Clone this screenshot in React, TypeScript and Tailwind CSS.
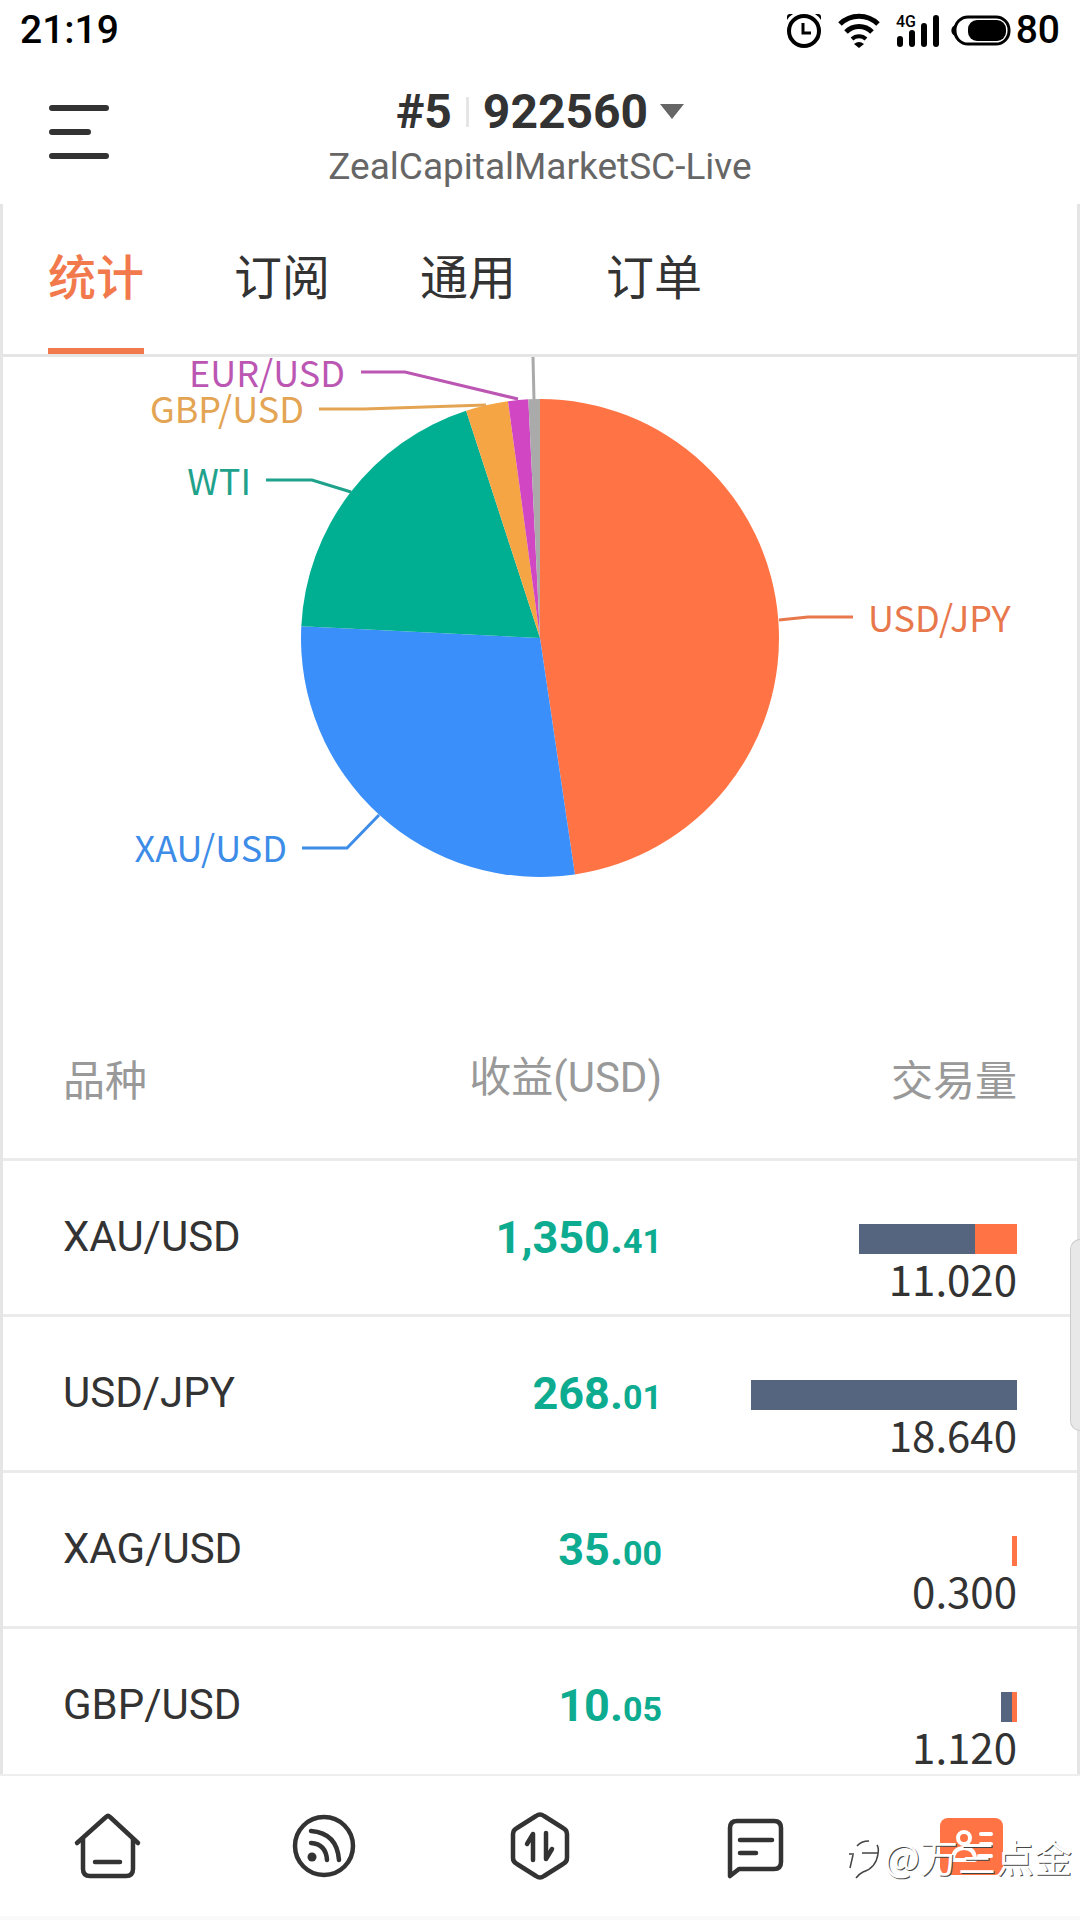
import * as React from 'react';

const tabs = ['统计', '订阅', '通用', '订单'];

// share of each symbol, in degrees of the circle
const slices = [
    { name: 'USD/JPY', from: 0, to: 171.6, color: '#ff7344' },
    { name: 'XAU/USD', from: 171.6, to: 272.8, color: '#3a8ffa' },
    { name: 'WTI', from: 272.8, to: 342, color: '#00ae92' },
    { name: 'GBP/USD', from: 342, to: 352.3, color: '#f5a544' },
    { name: 'EUR/USD', from: 352.3, to: 357.2, color: '#d146c3' },
    { name: 'XAG/USD', from: 357.2, to: 360, color: '#aaaaaa' },
];

const labels = [
    { name: 'USD/JPY', x: 865, y: 275, anchor: 'start', color: '#e8784c', line: '776,263 805,260 850,260' },
    { name: 'XAU/USD', x: 284, y: 505, anchor: 'end', color: '#3d8ce8', line: '299,491 344,491 376,458' },
    { name: 'WTI', x: 248, y: 138, anchor: 'end', color: '#1fa28b', line: '263,123 309,123 348,135' },
    { name: 'GBP/USD', x: 301, y: 66, anchor: 'end', color: '#e3a453', line: '316,52 361,52 483,48' },
    { name: 'EUR/USD', x: 342, y: 30, anchor: 'end', color: '#bb56b3', line: '358,15 402,15 515,42' },
] as const;

const rows = [
    { symbol: 'XAU/USD', whole: '1,350.', cents: '41', volume: '11.020', buy: 116, sell: 42 },
    { symbol: 'USD/JPY', whole: '268.', cents: '01', volume: '18.640', buy: 266, sell: 0 },
    { symbol: 'XAG/USD', whole: '35.', cents: '00', volume: '0.300', buy: 0, sell: 5 },
    { symbol: 'GBP/USD', whole: '10.', cents: '05', volume: '1.120', buy: 11, sell: 5 },
];

const App = () => {
    return (
        <div className="relative flex h-screen flex-col overflow-hidden bg-white font-['Roboto','Noto_Sans_CJK_SC',sans-serif] text-[#333333]">
            <StatusBar />
            <Header />
            <div className="flex min-h-0 flex-1 flex-col border-x-3 border-[#e5e5e5]">
                <Tabs />
                <main className="min-h-0 flex-1 overflow-hidden">
                    <PieChart />
                    <SymbolTable />
                </main>
            </div>
            <BottomNav />
            {/* scroll thumb */}
            <div className="absolute top-[1239px] right-0 h-[192px] w-[10px] rounded-l-xl border border-r-0 border-[#cccccc] bg-[#e8e8e8]" />
            <Watermark />
        </div>
    );
};

export default App;

// status bar

const StatusBar = () => (
    <div className="flex h-[60px] items-center justify-between px-5 text-[39px] leading-none font-medium text-black">
        <span>21:19</span>
        <div className="flex items-center">
            <svg className="h-9 w-[36px]" viewBox="0 0 36 36" fill="none" stroke="currentColor">
                <circle cx="18" cy="19" r="15" strokeWidth="4" />
                <path d="M17 11v10h8" strokeWidth="3" />
                <path d="M1 8a18 18 0 0 1 6-6H4q-3 0-3 3zM35 8a18 18 0 0 0-6-6h3q3 0 3 3z" fill="currentColor" stroke="none" />
            </svg>
            <svg className="ml-4 h-9 w-[42px]" viewBox="0 0 42 36" fill="none" stroke="currentColor" strokeWidth="5">
                <path d="M2 12a27 27 0 0 1 38 0" />
                <path d="M8 20a18 18 0 0 1 26 0" />
                <path d="M14 27a10 10 0 0 1 14 0" strokeWidth="4" />
                <path d="M16 32q5-4 10 0l-5 4z" fill="currentColor" stroke="none" />
            </svg>
            <svg className="ml-4 h-9 w-[46px]" viewBox="0 0 46 36" fill="currentColor">
                <text x="0" y="15" fontSize="16" fontWeight="500">4G</text>
                <rect x="1" y="24" width="6" height="11" rx="3" />
                <rect x="13" y="18" width="6" height="17" rx="3" />
                <rect x="25" y="11" width="6" height="24" rx="3" />
                <rect x="37" y="3" width="6" height="32" rx="3" />
            </svg>
            <svg className="ml-2 h-9 w-[62px]" viewBox="0 0 62 36" fill="currentColor">
                <rect x="5" y="5" width="54" height="27" rx="13" fill="none" stroke="currentColor" strokeWidth="3" />
                <rect x="18" y="8" width="38" height="21" rx="9" />
                <path d="M5 13a6 6 0 0 0 0 11z" />
            </svg>
            <span className="ml-1">80</span>
        </div>
    </div>
);

// account header

const Header = () => (
    <header className="grid h-[144px] grid-cols-[1fr_auto_1fr] items-start">
        <button type="button" aria-label="menu" className="mt-[45px] ml-[49px] flex w-[62px] flex-col gap-[18px]">
            <span className="h-1.5 w-[60px] rounded-full bg-[#333333]" />
            <span className="h-1.5 w-[42px] rounded-full bg-[#333333]" />
            <span className="h-1.5 w-[60px] rounded-full bg-[#333333]" />
        </button>
        <div className="flex flex-col items-center pt-6">
            <button type="button" className="flex items-center text-5xl leading-[56px] font-bold">
                #5
                <span className="mx-[14px] h-[30px] w-[3px] bg-[#e5e5e5]" />
                922560
                <svg className="ml-3 h-4 w-6" viewBox="0 0 24 16" fill="#666666">
                    <path d="M0 0h24L12 15z" />
                </svg>
            </button>
            <p className="mt-1 text-[37px] leading-[46px] text-[#666666]">ZealCapitalMarketSC-Live</p>
        </div>
    </header>
);

// tabs

const Tabs = () => (
    <nav className="flex gap-[90px] border-b-3 border-[#e5e5e5] pl-[45px] text-5xl leading-[72px]">
        {tabs.map((tab, index) => (
            <button
                key={tab}
                type="button"
                className={
                    index === 0
                        ? 'border-b-6 border-[#f2794c] pt-[39px] pb-[33px] font-medium text-[#f2794c]'
                        : 'border-b-6 border-transparent pt-[39px] pb-[33px]'
                }
            >
                {tab}
            </button>
        ))}
    </nav>
);

// pie chart

const cx = 537;
const cy = 281;
const radius = 239;

const point = (deg: number) => {
    const rad = (deg * Math.PI) / 180;
    return `${cx + radius * Math.sin(rad)} ${cy - radius * Math.cos(rad)}`;
};

const PieChart = () => (
    <svg className="block w-full font-['Noto_Sans_CJK_SC',sans-serif]" viewBox="0 0 1074 640">
        {slices.map((slice) => (
            <path
                key={slice.name}
                d={`M${cx} ${cy}L${point(slice.from)}A${radius} ${radius} 0 0 1 ${point(slice.to)}Z`}
                fill={slice.color}
            />
        ))}
        <path d="M530 0l1 43" stroke="#aaaaaa" strokeWidth="3" />
        {labels.map((label) => (
            <g key={label.name}>
                <polyline points={label.line} fill="none" stroke={label.color} strokeWidth="3" />
                <text x={label.x} y={label.y} textAnchor={label.anchor} fontSize="36" fill={label.color}>
                    {label.name}
                </text>
            </g>
        ))}
    </svg>
);

// symbol table

const SymbolTable = () => (
    <table className="w-full table-fixed border-separate border-spacing-0 text-[42px]">
        <thead>
            <tr className="h-[164px] text-[#999999] *:border-b-3 *:border-[#ebebeb] *:font-normal">
                <th className="w-[31%] pl-[60px] text-left font-['Noto_Sans_CJK_SC',sans-serif]">品种</th>
                <th className="text-right">收益(USD)</th>
                <th className="w-[415px] pr-[60px] text-right font-['Noto_Sans_CJK_SC',sans-serif]">交易量</th>
            </tr>
        </thead>
        <tbody>
            {rows.map((row) => (
                <tr key={row.symbol} className="h-[156px] *:border-b-3 *:border-[#ebebeb]">
                    <td className="pb-0.5 pl-[60px]">{row.symbol}</td>
                    <td className="text-right text-[45px] font-bold text-[#0dab8f]">
                        {row.whole}
                        <span className="text-[34px]">{row.cents}</span>
                    </td>
                    <td className="pt-[63px] pr-[60px] text-right align-top font-['Noto_Sans_CJK_SC',sans-serif] leading-[48px]">
                        <div className="flex h-[30px] justify-end">
                            <div className="bg-[#56657f]" style={{ width: row.buy }} />
                            <div className="bg-[#ff7344]" style={{ width: row.sell }} />
                        </div>
                        {row.volume}
                    </td>
                </tr>
            ))}
        </tbody>
    </table>
);

// bottom navigation

const NavIcon = ({ label, children }: { label: string; children: React.ReactNode }) => (
    <button type="button" aria-label={label} className="flex items-center justify-center">
        <svg
            className="size-[72px]"
            viewBox="0 0 72 72"
            fill="none"
            stroke="#333333"
            strokeWidth="4.5"
            strokeLinecap="round"
            strokeLinejoin="round"
        >
            {children}
        </svg>
    </button>
);

const BottomNav = () => (
    <nav className="grid h-[146px] shrink-0 grid-cols-5 border-t-2 border-b-4 border-t-[#eeeeee] border-b-[#fafafa] bg-white">
        <NavIcon label="home">
            <path d="M5 33L34 7q2-2 4 0L66 33" />
            <path d="M11 29v30q0 7 7 7h36q7 0 7-7V29M23 52h25" />
        </NavIcon>
        <NavIcon label="signals">
            <circle cx="36" cy="36" r="29" />
            <path d="M23 33q15 1 16 17M23 21q26 2 28 29" />
            <circle cx="24" cy="47" r="4.5" fill="#333333" stroke="none" />
        </NavIcon>
        <NavIcon label="trade">
            <path d="M9 24q0-4 4-6L32 6q4-3 8 0l19 12q4 2 4 6v24q0 4-4 6L40 66q-4 3-8 0L13 54q-4-2-4-6z" />
            <path d="M23 34l6-10v26M42 23v26l6-10" />
        </NavIcon>
        <NavIcon label="messages">
            <path d="M10 66V18q0-7 7-7h37q7 0 7 7v34q0 7-7 7H19z" />
            <path d="M20 30h32M20 43h16" />
        </NavIcon>
        <NavIcon label="account">
            <rect x="4" y="8" width="63" height="57" rx="8" fill="#ff7344" stroke="none" />
            <g stroke="#ffffff" strokeWidth="4">
                <circle cx="28" cy="28" r="6" />
                <path d="M17 50q0-12 11-12t11 12z" />
                <path d="M45 24h10M45 34h10M43 46h12" />
            </g>
        </NavIcon>
    </nav>
);

// watermark over the bottom right corner

const Watermark = () => (
    <div className="pointer-events-none absolute right-2 bottom-9 flex items-center gap-1 font-['Noto_Sans_CJK_SC',sans-serif] text-[38px] leading-[56px] text-white [text-shadow:1px_1px_0_#444444]">
        <svg className="mt-2 h-10 w-8" viewBox="0 0 32 40" fill="none" stroke="#444444" strokeWidth="1.5">
            <path d="M9 6Q13 1 21 1M1 14h5M14 13h16" />
            <path d="M5 15L2 28M29 5q2 3 1 9Q28 28 15 32q-4 2-7 6" />
        </svg>
        @万三点金
    </div>
);
